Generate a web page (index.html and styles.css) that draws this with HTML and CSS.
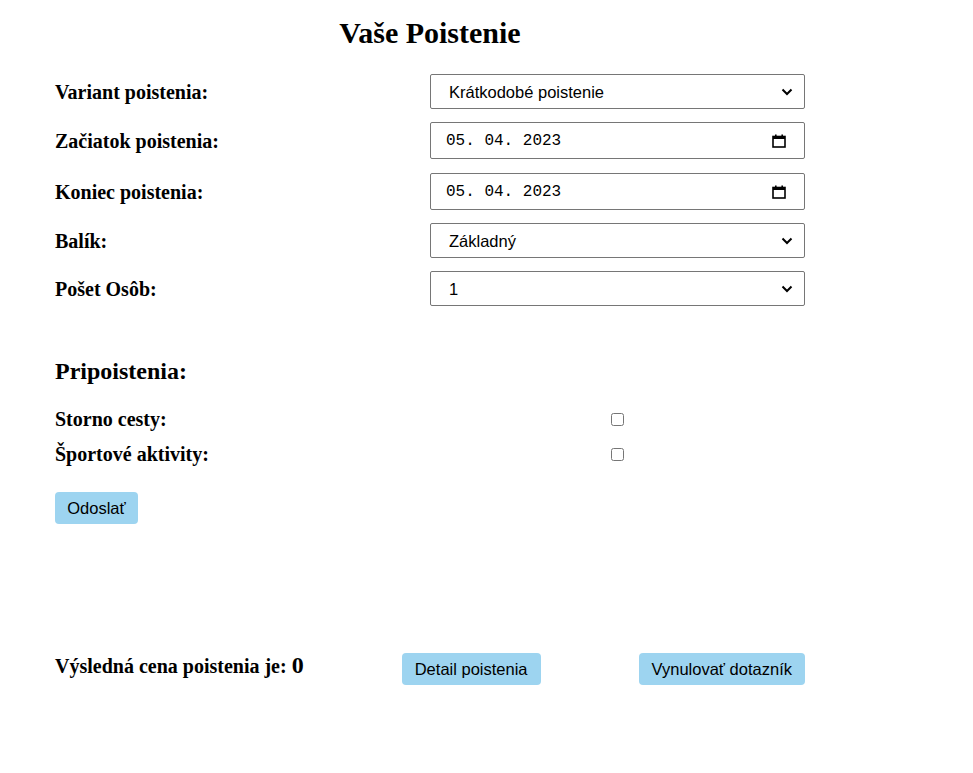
FILE: index.html
```html
<!DOCTYPE html>
<html lang="sk">
<head>
<meta charset="utf-8">
<title>Vaše Poistenie</title>
<link rel="stylesheet" href="styles.css">
</head>
<body>
<main class="page">
  <h1 class="title">Vaše Poistenie</h1>
  <form class="form">
    <div class="row">
      <label class="label" for="variant">Variant poistenia:</label>
      <div class="select-wrap">
        <select id="variant" class="control select"><option>Krátkodobé poistenie</option></select>
        <svg class="chevron" viewBox="0 0 12 8" width="12" height="8"><path d="M1.5 1.5 L6 6 L10.5 1.5" fill="none" stroke="#000" stroke-width="2"/></svg>
      </div>
    </div>
    <div class="row row-wide">
      <label class="label">Začiatok poistenia:</label>
      <div class="control date">
        <span class="date-text">05. 04. 2023</span>
        <svg class="cal" viewBox="0 0 14 14" width="14" height="14"><rect x="1" y="2.5" width="12" height="10.5" fill="none" stroke="#000" stroke-width="1.6"/><rect x="1" y="2.5" width="12" height="2.5" fill="#000"/><rect x="3" y="0.5" width="1.6" height="3" fill="#000"/><rect x="9.4" y="0.5" width="1.6" height="3" fill="#000"/></svg>
      </div>
    </div>
    <div class="row">
      <label class="label">Koniec poistenia:</label>
      <div class="control date">
        <span class="date-text">05. 04. 2023</span>
        <svg class="cal" viewBox="0 0 14 14" width="14" height="14"><rect x="1" y="2.5" width="12" height="10.5" fill="none" stroke="#000" stroke-width="1.6"/><rect x="1" y="2.5" width="12" height="2.5" fill="#000"/><rect x="3" y="0.5" width="1.6" height="3" fill="#000"/><rect x="9.4" y="0.5" width="1.6" height="3" fill="#000"/></svg>
      </div>
    </div>
    <div class="row">
      <label class="label" for="balik">Balík:</label>
      <div class="select-wrap">
        <select id="balik" class="control select"><option>Základný</option></select>
        <svg class="chevron" viewBox="0 0 12 8" width="12" height="8"><path d="M1.5 1.5 L6 6 L10.5 1.5" fill="none" stroke="#000" stroke-width="2"/></svg>
      </div>
    </div>
    <div class="row">
      <label class="label" for="osoby">Pošet Osôb:</label>
      <div class="select-wrap">
        <select id="osoby" class="control select"><option>1</option></select>
        <svg class="chevron" viewBox="0 0 12 8" width="12" height="8"><path d="M1.5 1.5 L6 6 L10.5 1.5" fill="none" stroke="#000" stroke-width="2"/></svg>
      </div>
    </div>

    <h2 class="subtitle">Pripoistenia:</h2>
    <div class="check-row">
      <label class="label" for="storno">Storno cesty:</label>
      <div class="check-cell"><input type="checkbox" id="storno" class="check"></div>
    </div>
    <div class="check-row">
      <label class="label" for="sport">Športové aktivity:</label>
      <div class="check-cell"><input type="checkbox" id="sport" class="check"></div>
    </div>
    <button type="button" class="btn submit">Odoslať</button>
  </form>

  <div class="result">
    <p class="price">Výsledná cena poistenia je: <span class="price-value">0</span></p>
    <button type="button" class="btn">Detail poistenia</button>
    <button type="button" class="btn">Vynulovať dotazník</button>
  </div>
</main>
</body>
</html>
```

FILE: styles.css
```css
html, body {
  margin: 0;
  padding: 0;
  background: #fff;
  color: #000;
}

.page {
  width: 750px;
  margin-left: 55px;
  padding-top: 16px;
  font-family: "Liberation Serif", "Times New Roman", serif;
}

.title {
  margin: 0 0 24px 0;
  text-align: center;
  font-size: 30px;
  line-height: 34px;
  font-weight: bold;
}

.form {
  display: flex;
  flex-direction: column;
}

.row {
  display: grid;
  grid-template-columns: 375px 375px;
  align-items: center;
  margin-bottom: 13px;
}

.row-wide {
  margin-bottom: 14px;
}

.label {
  font-size: 20px;
  font-weight: bold;
  line-height: 22px;
}

.control {
  box-sizing: border-box;
  width: 375px;
  border: 1px solid #767676;
  border-radius: 2px;
  background: #fff;
  font-family: "Liberation Sans", Arial, sans-serif;
  font-size: 16.5px;
  color: #000;
}

.select-wrap {
  position: relative;
  display: flex;
}

.select {
  appearance: none;
  -webkit-appearance: none;
  height: 35px;
  padding: 0 30px 0 18px;
  margin: 0;
}

.chevron {
  position: absolute;
  right: 12px;
  top: 14px;
  pointer-events: none;
}

.date {
  height: 37px;
  display: flex;
  align-items: center;
  justify-content: space-between;
  padding: 0 18px 0 15px;
}

.date-text {
  font-family: "Liberation Mono", "DejaVu Sans Mono", monospace;
  font-size: 16px;
}

.cal {
  display: block;
}

.subtitle {
  margin: 38px 0 23px 0;
  font-size: 24px;
  line-height: 28px;
  font-weight: bold;
}

.check-row {
  display: grid;
  grid-template-columns: 375px 375px;
  align-items: center;
  margin-bottom: 13px;
}

.check-cell {
  display: flex;
  justify-content: center;
}

.check {
  width: 13px;
  height: 13px;
  margin: 0;
}

.btn {
  font-family: "Liberation Sans", Arial, sans-serif;
  font-size: 16.5px;
  line-height: 18px;
  color: #000;
  background: #9dd4f0;
  border: none;
  border-radius: 4px;
  padding: 7px 12px;
  cursor: pointer;
}

.submit {
  align-self: flex-start;
  margin-top: 14px;
  width: 83px;
  height: 32px;
  padding: 0;
}

.result {
  display: flex;
  justify-content: space-between;
  align-items: flex-start;
  margin-top: 129px;
}

.price {
  margin: 1px 0 0 0;
  font-size: 20px;
  font-weight: bold;
  line-height: 22px;
}

.price-value {
  font-size: 24px;
}

.result .btn {
  height: 32px;
  padding: 0 13px;
}
```
